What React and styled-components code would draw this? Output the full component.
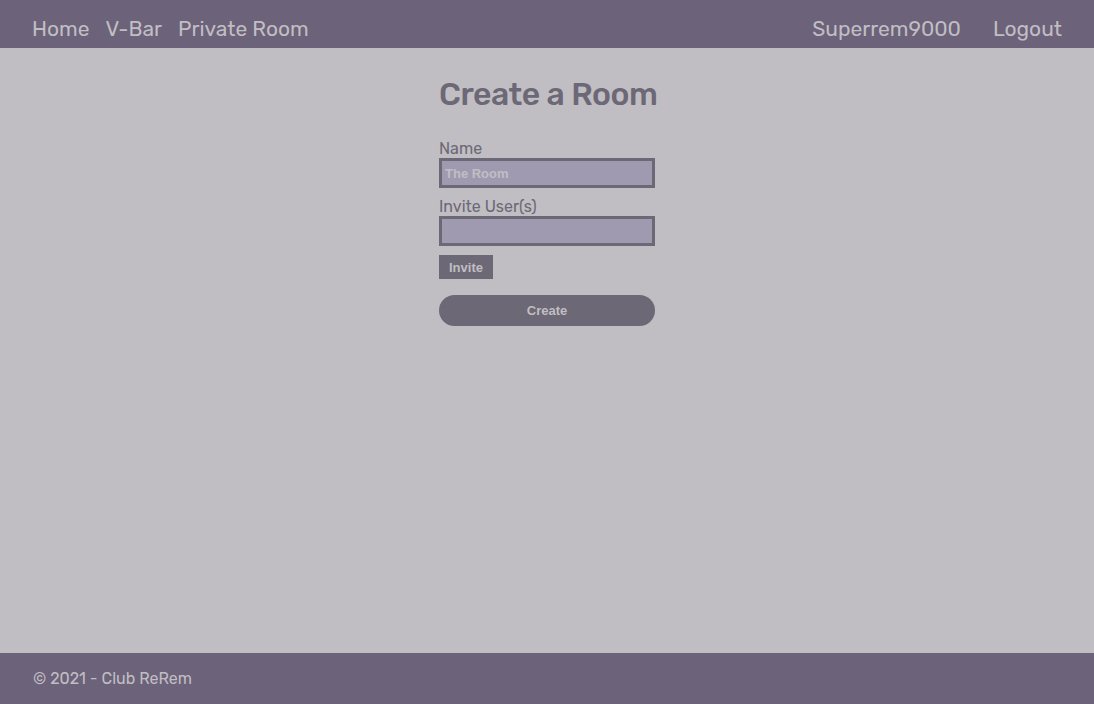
import styled, { createGlobalStyle } from "styled-components";

const GlobalStyle = createGlobalStyle`
  html, body {
    margin: 0;
    padding: 0;
    background: #c0bec3;
    font-family: Rubik, Roboto, "Noto Sans", sans-serif;
  }
  * { box-sizing: border-box; }
`;

const App = () => {
  return (
    <Page>
      <GlobalStyle />
      <Header>
        <NavGroup>
          <NavLink>Home</NavLink>
          <NavLink>V-Bar</NavLink>
          <NavLink>Private Room</NavLink>
        </NavGroup>
        <NavGroup $gap="32px">
          <NavLink>Superrem9000</NavLink>
          <NavLink>Logout</NavLink>
        </NavGroup>
      </Header>
      <Main>
        <Form>
          <Title>Create a Room</Title>
          <Label>Name</Label>
          <Input defaultValue="The Room" />
          <Label>Invite User(s)</Label>
          <Input />
          <InviteButton>Invite</InviteButton>
          <CreateButton>Create</CreateButton>
        </Form>
      </Main>
      <Footer>© 2021 - Club ReRem</Footer>
    </Page>
  );
};

export default App;

const Page = styled.div`
  display: flex;
  flex-direction: column;
  min-height: 100vh;
`;
const Header = styled.header`
  height: 48px;
  background: #6c627a;
  display: flex;
  justify-content: space-between;
  align-items: center;
  padding: 0 32px 0 32px;
`;
const NavGroup = styled.nav`
  display: flex;
  gap: ${(p) => p.$gap || "16px"};
  padding-top: 9px;
`;
const NavLink = styled.a`
  color: #c0bec3;
  font-size: 21px;
  line-height: 24px;
  cursor: pointer;
`;
const Main = styled.main`
  flex: 1;
  display: flex;
  justify-content: center;
`;
const Form = styled.div`
  width: 216px;
  display: flex;
  flex-direction: column;
  align-items: flex-start;
  padding-top: 26px;
`;
const Title = styled.h1`
  margin: 0 0 24px;
  font-size: 32px;
  line-height: 40px;
  font-weight: 500;
  letter-spacing: -0.5px;
  color: #6c6875;
  white-space: nowrap;
`;
const Label = styled.label`
  font-size: 16px;
  line-height: 19px;
  padding-top: 1px;
  color: #6c6875;
`;
const Input = styled.input`
  width: 216px;
  height: 30px;
  margin-bottom: 8px;
  border: 3px solid #6c6875;
  background: #a09ab1;
  padding: 0 3px;
  font-family: "Liberation Sans", Arial, sans-serif;
  font-weight: 700;
  font-size: 13px;
  color: #c0bec3;
  outline: none;
`;
const InviteButton = styled.button`
  height: 24px;
  padding: 0 10px;
  margin-top: 1px;
  border: none;
  background: #6c6875;
  color: #c0bec3;
  font-family: "Liberation Sans", Arial, sans-serif;
  font-weight: 700;
  font-size: 13px;
  cursor: pointer;
`;
const CreateButton = styled.button`
  width: 216px;
  height: 31px;
  margin-top: 16px;
  border: none;
  border-radius: 16px;
  background: #6c6875;
  color: #c0bec3;
  font-family: "Liberation Sans", Arial, sans-serif;
  font-weight: 700;
  font-size: 13px;
  cursor: pointer;
`;
const Footer = styled.footer`
  height: 51px;
  background: #6c627a;
  color: #c0bec3;
  display: flex;
  align-items: center;
  padding: 0 33px;
  font-size: 16px;
`;
